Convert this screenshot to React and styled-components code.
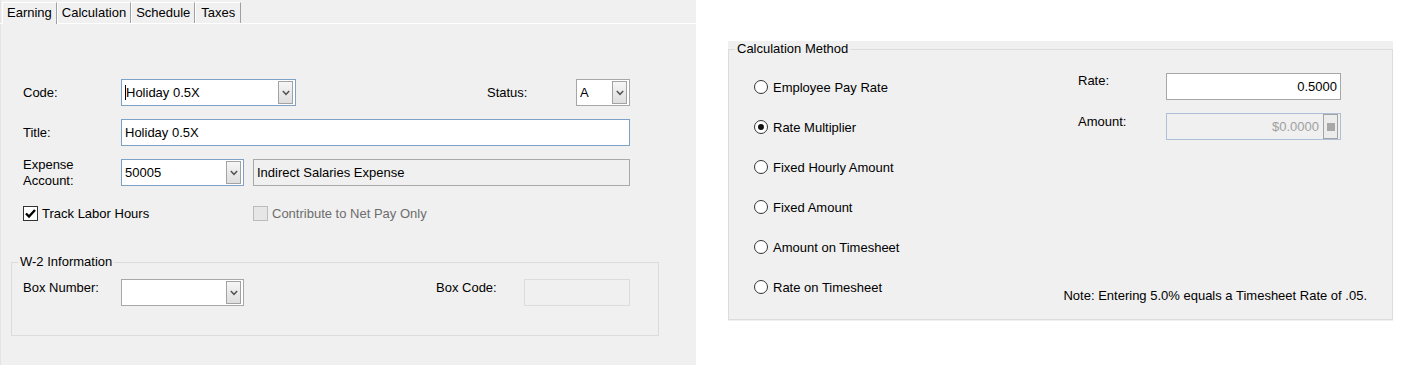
import styled, { createGlobalStyle } from "styled-components";

const GlobalStyle = createGlobalStyle`
  html, body {
    margin: 0;
    padding: 0;
    background: #fff;
  }
  body {
    font-family: "Liberation Sans", Arial, sans-serif;
    font-size: 13px;
    color: #000;
  }
`;

const Page = styled.div`
  display: flex;
  align-items: flex-start;
  width: 1401px;
  height: 365px;
  overflow: hidden;
`;

const LeftPanel = styled.div`
  flex: none;
  width: 696px;
  height: 365px;
  background: #f0f0f0;
  box-shadow: inset 1px 0 #e4e4e4;
`;

const TabStrip = styled.div`
  display: flex;
  align-items: flex-end;
  height: 23px;
  padding-left: 2px;
  border-bottom: 1px solid #fff;
`;

const Tab = styled.div`
  height: ${(p) => (p.$active ? 22 : 21)}px;
  margin-bottom: ${(p) => (p.$active ? -1 : 0)}px;
  line-height: 20px;
  padding: 0 ${(p) => p.$pad || 5}px;
  background: #f0f0f0;
  border-left: 1px solid #fff;
  border-top: 1px solid #fff;
  border-right: 1px solid #a0a0a0;
  box-sizing: border-box;
  white-space: nowrap;
`;

const Form = styled.div`
  padding-top: 55px;
`;

const Row = styled.div`
  display: flex;
  align-items: center;
  height: 27px;
  width: ${(p) => p.$w || 607}px;
  margin-top: ${(p) => p.$mt || 0}px;
  margin-left: ${(p) => (p.$ml === undefined ? 23 : p.$ml)}px;
`;

const Label = styled.span`
  flex: none;
  width: ${(p) => p.$w}px;
  line-height: 16px;
  white-space: nowrap;
  margin-left: ${(p) => (p.$push ? "auto" : "0")};
  align-self: ${(p) => (p.$top !== undefined ? "flex-start" : "center")};
  padding-top: ${(p) => p.$top || 0}px;
`;

const Combo = styled.div`
  flex: none;
  display: flex;
  align-items: stretch;
  box-sizing: border-box;
  width: ${(p) => p.$w}px;
  height: 27px;
  padding: 1px 2px 1px 1px;
  background: #fff;
  border: 1px solid ${(p) => (p.$focus ? "#7ea1c8" : "#a7a7a7")};
`;

const ComboText = styled.span`
  flex: 1;
  display: flex;
  align-items: center;
  padding-left: 2px;
  white-space: nowrap;
  overflow: hidden;
`;

const Caret = styled.span`
  width: 1px;
  height: 15px;
  background: #000;
`;

const DropButton = styled.span`
  flex: none;
  width: 15px;
  box-sizing: border-box;
  display: flex;
  align-items: center;
  justify-content: center;
  border: 1px solid #a2a2a2;
  background: linear-gradient(#f6f6f6, #dedede);
`;

const TextBox = styled.div`
  box-sizing: border-box;
  flex: ${(p) => (p.$w ? "none" : "1")};
  width: ${(p) => (p.$w ? `${p.$w}px` : "auto")};
  height: 27px;
  margin-left: ${(p) => p.$ml || 0}px;
  display: flex;
  align-items: center;
  justify-content: ${(p) => (p.$right ? "flex-end" : "flex-start")};
  padding: 0 ${(p) => (p.$right ? 3 : 0)}px 0 ${(p) => (p.$right ? 0 : 3)}px;
  background: ${(p) => (p.$disabled ? "#f0f0f0" : "#fff")};
  border: 1px solid ${(p) => p.$border || "#a7a7a7"};
  white-space: nowrap;
`;

const CheckWrap = styled.label`
  display: flex;
  align-items: center;
  width: ${(p) => p.$w || "auto"};
  white-space: nowrap;
  color: ${(p) => (p.$disabled ? "#6d6d6d" : "#000")};
`;

const Box = styled.span`
  flex: none;
  box-sizing: border-box;
  width: 15px;
  height: 15px;
  margin-right: 4px;
  display: flex;
  align-items: center;
  justify-content: center;
  background: ${(p) => (p.$disabled ? "#e6e6e6" : "#fff")};
  border: 1px solid ${(p) => (p.$disabled ? "#bcbcbc" : "#333")};
`;

const Group = styled.fieldset`
  margin: ${(p) => p.$margin};
  padding: ${(p) => p.$pad};
  width: ${(p) => p.$w}px;
  box-sizing: border-box;
  border: 1px solid #dcdcdc;
  min-inline-size: 0;
`;

const Legend = styled.legend`
  margin-left: ${(p) => p.$ml}px;
  padding: 0 2px;
  line-height: 16px;
  font-size: 13px;
`;

const RightPanel = styled.div`
  flex: none;
  margin: 41px 0 0 32px;
  width: 665px;
  height: 280px;
  background: #f0f0f0;
`;

const GroupBody = styled.div`
  display: grid;
  grid-template-columns: 324px minmax(0, 1fr);
  height: 231px;
`;

const RadioList = styled.div`
  display: flex;
  flex-direction: column;
  gap: 20px;
  padding-top: 4px;
`;

const RadioRow = styled.label`
  display: flex;
  align-items: center;
  height: 20px;
  white-space: nowrap;
`;

const Radio = styled.span`
  flex: none;
  box-sizing: border-box;
  width: 14px;
  height: 14px;
  margin-right: 5px;
  border-radius: 50%;
  border: 1px solid #333;
  background: #fff;
  display: flex;
  align-items: center;
  justify-content: center;

  &::after {
    content: "";
    display: ${(p) => (p.$on ? "block" : "none")};
    width: 6px;
    height: 6px;
    border-radius: 50%;
    background: #111;
  }
`;

const RightColumn = styled.div`
  display: flex;
  flex-direction: column;
  min-width: 0;
`;

const FieldRow = styled.div`
  display: flex;
  height: 27px;
  margin-top: ${(p) => p.$mt || 0}px;
`;

const AmountBox = styled.div`
  box-sizing: border-box;
  width: 175px;
  height: 27px;
  display: flex;
  align-items: stretch;
  justify-content: flex-end;
  padding: 0 2px 0 0;
  background: #f0f0f0;
  border: 1px solid #aec0d5;
  color: #a0a0a0;
`;

const AmountText = styled.span`
  display: flex;
  align-items: center;
  padding-right: 4px;
`;

const SpinButton = styled.span`
  box-sizing: border-box;
  width: 15px;
  display: flex;
  align-items: center;
  justify-content: center;
  border: 1px solid #a3a3a3;
  background: #ececec;

  &::after {
    content: "";
    width: 8px;
    height: 8px;
    background: #a8a8a8;
  }
`;

const Note = styled.div`
  margin-top: auto;
  align-self: flex-end;
  line-height: 16px;
  white-space: nowrap;
`;

function Chevron() {
  return (
    <svg width="8" height="6" viewBox="0 0 8 6">
      <polyline points="0.8,1 4,4.3 7.2,1" fill="none" stroke="#555" strokeWidth="1.5" />
    </svg>
  );
}

function ComboBox({ w, focus, caret, children }) {
  return (
    <Combo $w={w} $focus={focus}>
      <ComboText>
        {caret && <Caret />}
        {children}
      </ComboText>
      <DropButton>
        <Chevron />
      </DropButton>
    </Combo>
  );
}

const methods = [
  "Employee Pay Rate",
  "Rate Multiplier",
  "Fixed Hourly Amount",
  "Fixed Amount",
  "Amount on Timesheet",
  "Rate on Timesheet",
];

export default function App() {
  return (
    <Page>
      <GlobalStyle />
      <LeftPanel>
        <TabStrip>
          <Tab $active $pad={4}>Earning</Tab>
          <Tab $pad={4}>Calculation</Tab>
          <Tab $pad={4}>Schedule</Tab>
          <Tab $pad={5}>Taxes</Tab>
        </TabStrip>

        <Form>
          <Row>
            <Label $w={98}>Code:</Label>
            <ComboBox w={175} focus caret>Holiday 0.5X</ComboBox>
            <Label $w={89} $push>Status:</Label>
            <ComboBox w={54}>A</ComboBox>
          </Row>

          <Row $mt={13}>
            <Label $w={98}>Title:</Label>
            <TextBox $border="#7ea1c8">Holiday 0.5X</TextBox>
          </Row>

          <Row $mt={13}>
            <Label $w={98}>Expense<br />Account:</Label>
            <ComboBox w={123} focus>50005</ComboBox>
            <TextBox $ml={9} $disabled $border="#a9a9a9">Indirect Salaries Expense</TextBox>
          </Row>

          <Row $mt={14}>
            <CheckWrap $w="230px">
              <Box>
                <svg width="13" height="13" viewBox="0 0 13 13">
                  <polyline points="2,6.5 5,9.5 11,3" fill="none" stroke="#000" strokeWidth="2.4" />
                </svg>
              </Box>
              Track Labor Hours
            </CheckWrap>
            <CheckWrap $disabled>
              <Box $disabled />
              Contribute to Net Pay Only
            </CheckWrap>
          </Row>

          <Group $margin="27px 0 0 11px" $pad="9px 11px 29px" $w={648}>
            <Legend $ml={-5}>W-2 Information</Legend>
            <Row $ml={0}>
              <Label $w={98} $top={1}>Box Number:</Label>
              <ComboBox w={123} />
              <Label $w={88} $push $top={1}>Box Code:</Label>
              <TextBox $w={106} $disabled $border="#dcdcdc" />
            </Row>
          </Group>
        </Form>
      </LeftPanel>

      <RightPanel>
        <Group $margin="0" $pad="16px 25px 15px" $w={665}>
          <Legend $ml={-19}>Calculation Method</Legend>
          <GroupBody>
            <RadioList>
              {methods.map((m) => (
                <RadioRow key={m}>
                  <Radio $on={m === "Rate Multiplier"} />
                  {m}
                </RadioRow>
              ))}
            </RadioList>

            <RightColumn>
              <FieldRow>
                <Label $w={88} $top={0}>Rate:</Label>
                <TextBox $w={175} $right>0.5000</TextBox>
              </FieldRow>
              <FieldRow $mt={13}>
                <Label $w={88} $top={1}>Amount:</Label>
                <AmountBox>
                  <AmountText>$0.0000</AmountText>
                  <SpinButton />
                </AmountBox>
              </FieldRow>
              <Note>Note: Entering 5.0% equals a Timesheet Rate of .05.</Note>
            </RightColumn>
          </GroupBody>
        </Group>
      </RightPanel>
    </Page>
  );
}
